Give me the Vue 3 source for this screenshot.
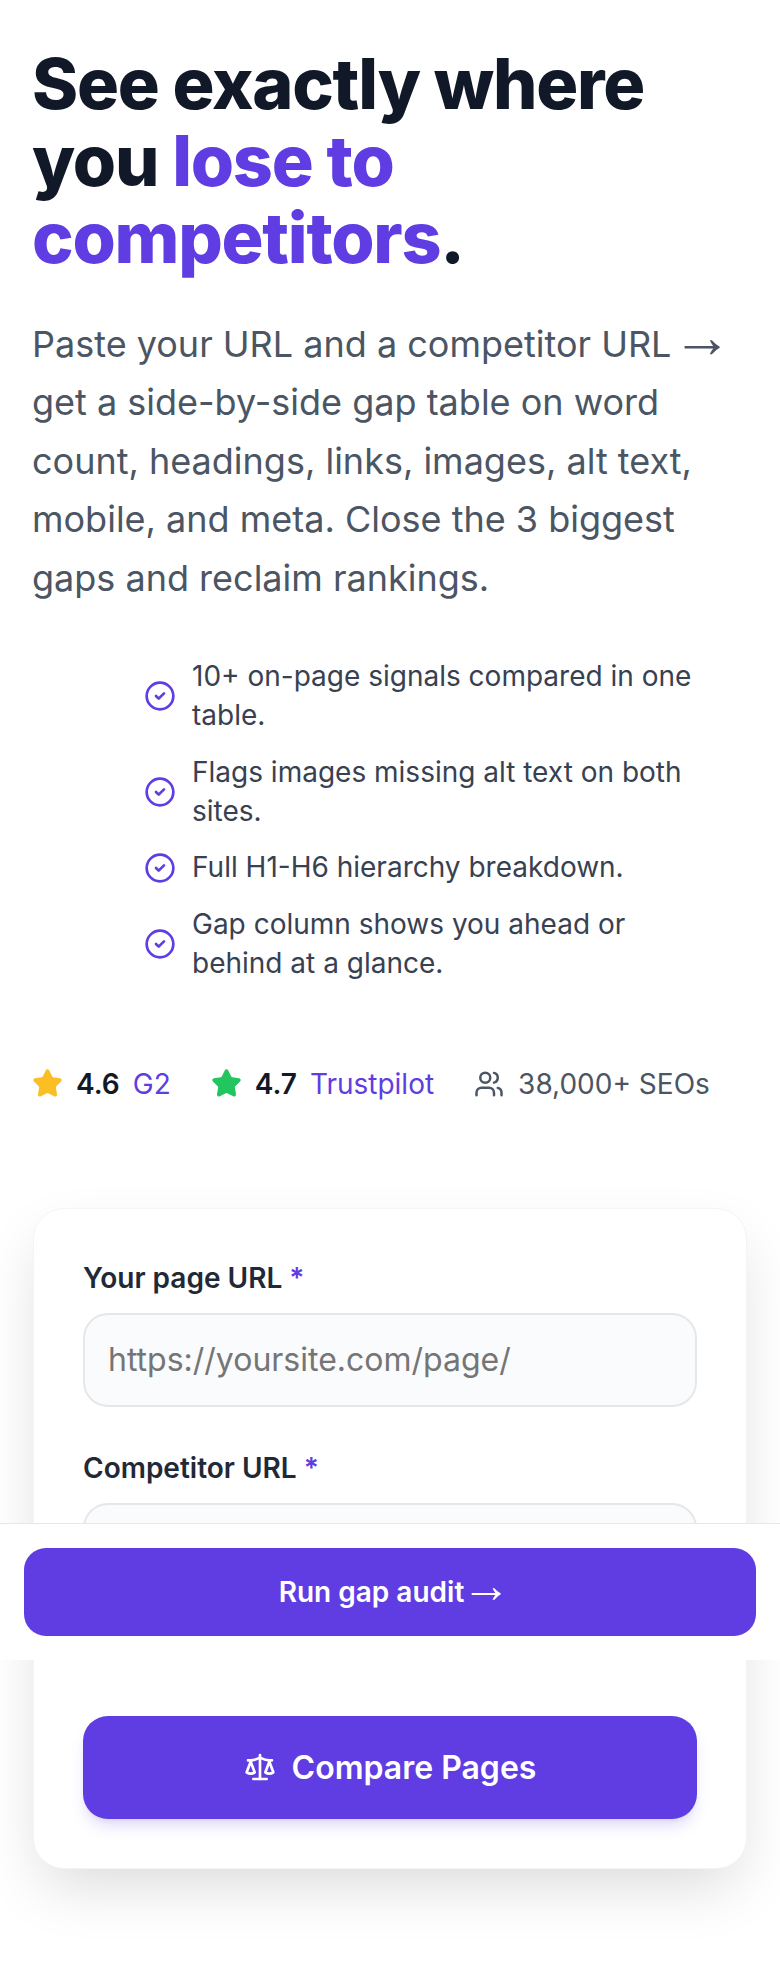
<script setup>
const points = [
  '10+ on-page signals compared in one table.',
  'Flags images missing alt text on both sites.',
  'Full H1-H6 hierarchy breakdown.',
  'Gap column shows you ahead or behind at a glance.'
]
const starPath = 'M11.525 2.295a.53.53 0 0 1 .95 0l2.31 4.679a2.123 2.123 0 0 0 1.595 1.16l5.166.756a.53.53 0 0 1 .294.904l-3.736 3.638a2.123 2.123 0 0 0-.611 1.878l.882 5.14a.53.53 0 0 1-.771.56l-4.618-2.428a2.122 2.122 0 0 0-1.973 0L6.396 21.01a.53.53 0 0 1-.77-.56l.881-5.139a2.122 2.122 0 0 0-.611-1.879L2.16 9.795a.53.53 0 0 1 .294-.906l5.165-.755a2.122 2.122 0 0 0 1.597-1.16z'
</script>

<template>
  <div class="page">
    <section class="hero">
      <h1>See exactly where you <span class="accent">lose to competitors</span>.</h1>
      <p class="lead">Paste your URL and a competitor URL <span class="arrow">→</span> get a side-by-side gap table on word count, headings, links, images, alt text, mobile, and meta. Close the 3 biggest gaps and reclaim rankings.</p>
      <ul class="points">
        <li v-for="point in points" :key="point">
          <svg class="check" viewBox="0 0 24 24" fill="none" stroke="currentColor" stroke-width="2" stroke-linecap="round" stroke-linejoin="round">
            <circle cx="12" cy="12" r="10" />
            <path d="m9 12 2 2 4-4" />
          </svg>
          <span>{{ point }}</span>
        </li>
      </ul>
      <div class="proof">
        <div class="proof-item">
          <svg class="star gold" viewBox="0 0 24 24" fill="currentColor" stroke="currentColor" stroke-width="2" stroke-linejoin="round"><path :d="starPath" /></svg>
          <strong>4.6</strong>
          <span class="brand">G2</span>
        </div>
        <div class="proof-item">
          <svg class="star green" viewBox="0 0 24 24" fill="currentColor" stroke="currentColor" stroke-width="2" stroke-linejoin="round"><path :d="starPath" /></svg>
          <strong>4.7</strong>
          <span class="brand">Trustpilot</span>
        </div>
        <div class="proof-item users">
          <svg class="users-icon" viewBox="0 0 24 24" fill="none" stroke="currentColor" stroke-width="2" stroke-linecap="round" stroke-linejoin="round">
            <path d="M16 21v-2a4 4 0 0 0-4-4H6a4 4 0 0 0-4 4v2" />
            <circle cx="9" cy="7" r="4" />
            <path d="M22 21v-2a4 4 0 0 0-3-3.87" />
            <path d="M16 3.13a4 4 0 0 1 0 7.75" />
          </svg>
          <span>38,000+ SEOs</span>
        </div>
      </div>
    </section>

    <form class="card" @submit.prevent>
      <div class="field">
        <label for="own">Your page URL <span class="req">*</span></label>
        <input id="own" type="url" placeholder="https://yoursite.com/page/" />
      </div>
      <div class="field">
        <label for="rival">Competitor URL <span class="req">*</span></label>
        <input id="rival" type="url" placeholder="https://competitor.com/page/" />
      </div>
      <button class="compare" type="submit">
        <svg class="scale" viewBox="0 0 24 24" fill="none" stroke="currentColor" stroke-width="2" stroke-linecap="round" stroke-linejoin="round">
          <path d="m16 16 3-8 3 8c-.87.65-1.92 1-3 1s-2.13-.35-3-1Z" />
          <path d="m2 16 3-8 3 8c-.87.65-1.92 1-3 1s-2.13-.35-3-1Z" />
          <path d="M7 21h10" />
          <path d="M12 3v18" />
          <path d="M3 7h2c2 0 5-1 7-2 2 1 5 2 7 2h2" />
        </svg>
        Compare Pages
      </button>
    </form>

    <div class="sticky-bar">
      <button class="run" type="button"><span>Run gap audit <span class="arrow">→</span></span></button>
    </div>
  </div>
</template>

<style>
html, body { margin: 0; background: #fff; }
</style>

<style scoped>
.page {
  position: relative;
  height: 1964px;
  overflow: hidden;
  background: #fff;
  font-family: Inter, "Noto Sans", sans-serif;
  box-sizing: border-box;
}
.hero { padding: 45px 32px 0; }
h1 {
  margin: 0;
  font-size: 70px;
  line-height: 77px;
  font-weight: 800;
  letter-spacing: -1.25px;
  color: #111827;
}
.accent { color: #5f3de3; }
.arrow {
  font-family: "Liberation Sans", sans-serif;
  font-size: 1.65em;
  font-weight: 400;
  line-height: 0;
  margin-left: -9px;
}
.lead {
  margin: 38.5px 0 0;
  font-size: 36px;
  line-height: 58.6px;
  color: #4b5563;
}
.points {
  list-style: none;
  margin: 50px 0 0;
  padding: 0 40px 0 112px;
  display: flex;
  flex-direction: column;
  gap: 17.5px;
}
.points li {
  display: flex;
  align-items: center;
  gap: 16px;
  font-size: 28px;
  line-height: 39px;
  color: #374151;
}
.check { width: 32px; height: 32px; flex: none; color: #5f3de3; }
.proof {
  display: flex;
  align-items: center;
  gap: 40px;
  margin-top: 81px;
  font-size: 28px;
  line-height: 40px;
  color: #4b5563;
  white-space: nowrap;
}
.proof-item { display: flex; align-items: center; gap: 13px; }
.star { width: 31px; height: 31px; flex: none; }
.gold { color: #fbbf24; }
.green { color: #22c55e; }
.proof strong { font-weight: 600; color: #111827; }
.brand { color: #5f3de3; }
.users-icon { width: 30px; height: 30px; flex: none; margin-right: 1px; color: #4b5563; }
.card {
  margin: 104px 33px 0;
  padding: 49px 49px 49px;
  height: 661px;
  box-sizing: border-box;
  display: flex;
  flex-direction: column;
  background: #fff;
  border: 1px solid #f3f4f6;
  border-radius: 31px;
  box-shadow: 0 25px 60px -10px rgba(0, 0, 0, 0.15);
}
.field { margin-bottom: 41px; }
label {
  display: block;
  margin-bottom: 15px;
  font-size: 28px;
  line-height: 40px;
  font-weight: 600;
  color: #1f2937;
}
.req { color: #5f3de3; }
input {
  display: block;
  width: 100%;
  height: 94px;
  box-sizing: border-box;
  padding: 0 23px;
  font: 400 32px Inter, sans-serif;
  color: #111827;
  background: #fafbfc;
  border: 2px solid #e5e7eb;
  border-radius: 25px;
  outline: none;
}
input::placeholder { color: #757575; opacity: 1; }
button {
  display: flex;
  align-items: center;
  justify-content: center;
  border: 0;
  color: #fff;
  background: #5f3de3;
  font-family: Inter, sans-serif;
  font-weight: 600;
  cursor: pointer;
}
.compare {
  width: 100%;
  height: 103px;
  margin-top: 78px;
  gap: 16px;
  font-size: 32px;
  border-radius: 25px;
  flex: none;
  box-shadow: 0 10px 15px -3px rgba(95, 61, 227, 0.18), 0 4px 6px -4px rgba(0, 0, 0, 0.1);
}
.scale { width: 32px; height: 32px; flex: none; }
.sticky-bar {
  position: absolute;
  left: 0;
  right: 0;
  top: 1523px;
  height: 137px;
  box-sizing: border-box;
  padding: 24px 24px 0;
  background: #fff;
  border-top: 1px solid #e5e7eb;
}
.run {
  width: 100%;
  height: 87.5px;
  font-size: 28px;
  white-space: nowrap;
  border-radius: 22px;
}
.run .arrow {
  font-size: 1.75em;
  margin: 0 -9.5px;
}
</style>
